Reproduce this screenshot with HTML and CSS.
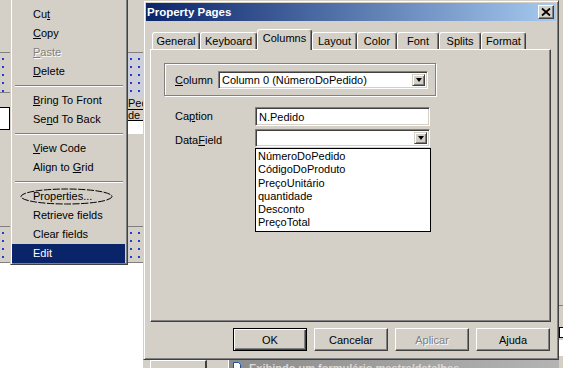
FILE: index.html
```html
<!DOCTYPE html>
<html lang="pt">
<head>
    <meta charset="UTF-8">
    <title>Property Pages</title>
    <link rel="stylesheet" href="styles.css">
</head>
<body>
<div class="desk">

    <!-- Form designer behind the popup menu -->
    <div class="designer">
        <div class="strip strip-left">
            <div class="b-grey h52"></div>
            <div class="b-line"></div>
            <div class="b-dots h39"></div>
            <div class="b-line"></div>
            <div class="b-grey h14"></div>
            <div class="b-cell"></div>
            <div class="b-grey h96"></div>
            <div class="b-line"></div>
            <div class="b-dots h35"></div>
            <div class="b-line"></div>
            <div class="b-white"></div>
        </div>
        <div class="strip strip-right">
            <div class="b-grey h52"></div>
            <div class="b-line"></div>
            <div class="b-dots b-blue h44"></div>
            <div class="b-text h13">Ped</div>
            <div class="b-text h11">de</div>
            <div class="b-white h13"></div>
            <div class="b-grey h92"></div>
            <div class="b-line"></div>
            <div class="b-dots h35"></div>
            <div class="b-line"></div>
            <div class="b-white"></div>
        </div>
    </div>

    <!-- Popup menu -->
    <ul class="menu">
        <li>Cu<u>t</u></li>
        <li><u>C</u>opy</li>
        <li class="off"><u>P</u>aste</li>
        <li><u>D</u>elete</li>
        <li class="sep"></li>
        <li><u>B</u>ring To Front</li>
        <li>Se<u>n</u>d To Back</li>
        <li class="sep"></li>
        <li><u>V</u>iew Code</li>
        <li>Align to <u>G</u>rid</li>
        <li class="sep"></li>
        <li class="circled">Properties...
            <svg class="ring" width="93" height="17" viewBox="0 0 93 17">
                <ellipse cx="46.5" cy="8.5" rx="45.5" ry="7.5" fill="none" stroke="#000" stroke-width="1" stroke-dasharray="7 1.5"/>
            </svg>
        </li>
        <li>Retrieve fields</li>
        <li>Clear fields</li>
        <li class="hot">Edit</li>
    </ul>

    <!-- Property Pages dialog -->
    <div class="dialog">
        <div class="titlebar">
            <span class="title">Property Pages</span>
            <button class="close">
                <svg width="14" height="12" viewBox="0 0 14 12">
                    <path d="M3 2.5l8 7M11 2.5l-8 7" stroke="#000" stroke-width="1.7" fill="none"/>
                </svg>
            </button>
        </div>
        <div class="sheet">
            <div class="tabs">
                <div class="tab">General</div>
                <div class="tab">Keyboard</div>
                <div class="tab on">Columns</div>
                <div class="tab">Layout</div>
                <div class="tab">Color</div>
                <div class="tab">Font</div>
                <div class="tab">Splits</div>
                <div class="tab">Format</div>
            </div>
            <div class="page">
                <div class="group">
                    <label class="group-label"><u>C</u>olumn</label>
                    <div class="combo combo-column">
                        <span class="combo-text">Column 0 (NúmeroDoPedido)</span>
                        <span class="drop"></span>
                    </div>
                </div>
                <div class="fields">
                    <label class="field-label">Ca<u>p</u>tion</label>
                    <div class="edit">N.Pedido</div>
                    <label class="field-label low">Data<u>F</u>ield</label>
                    <div class="combo">
                        <span class="combo-text"></span>
                        <span class="drop"></span>
                        <ul class="droplist">
                            <li>NúmeroDoPedido</li>
                            <li>CódigoDoProduto</li>
                            <li>PreçoUnitário</li>
                            <li>quantidade</li>
                            <li>Desconto</li>
                            <li>PreçoTotal</li>
                        </ul>
                    </div>
                </div>
            </div>
            <div class="buttons">
                <button class="btn default">OK</button>
                <button class="btn">Cancelar</button>
                <button class="btn disabled">Aplicar</button>
                <button class="btn">Ajuda</button>
            </div>
        </div>
    </div>

    <!-- Window behind the dialog, peeking out at the bottom -->
    <div class="behind">
        <div class="bh-gap"></div>
        <div class="bh-btn"></div>
        <div class="bh-sep"></div>
        <div class="bh-caption">
            <svg class="bh-icon" width="9" height="9" viewBox="0 0 9 9">
                <path d="M0.5 0.5h5l2 2v6h-7z" fill="#fff" stroke="#1c4fa0"/>
            </svg>
            <span>Exibindo um formulário mestre/detalhes</span>
        </div>
    </div>

    <div class="edge">
        <div class="e-grey h305"></div>
        <div class="b-line"></div>
        <div class="e-grey h21"></div>
        <div class="e-icon"></div>
        <div class="e-white"></div>
    </div>
</div>
</body>
</html>
```

FILE: styles.css
```css
* {
    margin: 0;
    padding: 0;
    box-sizing: border-box;
}

body {
    width: 563px;
    height: 368px;
    overflow: hidden;
    background: #d4d0c8;
    font-family: 'Liberation Sans', Arial, sans-serif;
    font-size: 11px;
    color: #000;
}

.desk {
    position: relative;
    width: 563px;
    height: 368px;
    overflow: hidden;
}

/* Form designer scraps */
.designer {
    position: absolute;
    left: 0;
    top: 0;
    width: 143px;
    height: 368px;
    display: flex;
    justify-content: space-between;
    background: #fff;
}

.strip {
    display: flex;
    flex-direction: column;
    height: 100%;
}

.strip-left { width: 10px; }
.strip-right { width: 15px; overflow: hidden; }

.b-grey { background: #d4d0c8; }
.b-line { height: 1px; background: #808080; }
.b-white { background: #fff; flex-grow: 1; }
.b-white.h13 { flex-grow: 0; }

.b-dots {
    background-color: #d4d0c8;
    background-image: radial-gradient(circle, #1b3fd6 0.9px, transparent 1.1px);
    background-size: 8px 8px;
    background-position: -1px 2px;
}

.b-blue { background-color: #cfcfda; }

.b-cell {
    height: 23px;
    background: #fff;
    border: 1px solid #000;
    border-left: 0;
}

.b-text {
    background: #d4d0c8;
    border-bottom: 1px solid #000;
    line-height: 12px;
    white-space: nowrap;
}

.h13 { height: 13px; }
.h11 { height: 11px; line-height: 10px; }
.h14 { height: 14px; }
.h21 { height: 21px; }
.h35 { height: 35px; }
.h39 { height: 39px; }
.h44 { height: 44px; }
.h52 { height: 52px; }
.h92 { height: 92px; }
.h96 { height: 96px; }
.h305 { height: 305px; }

/* Popup menu */
.menu {
    position: absolute;
    left: 10px;
    top: 0;
    width: 118px;
    list-style: none;
    padding: 5px 2px 1px 1px;
    background: #d4d0c8;
    border: 1px solid;
    border-top: 0;
    border-color: #d4d0c8 #404040 #404040 #d4d0c8;
    box-shadow: inset 1px 0 #fff, inset -1px -1px #808080;
    z-index: 2;
}

.menu li {
    position: relative;
    height: 19px;
    line-height: 19px;
    padding-left: 21px;
    white-space: nowrap;
}

.menu li.off {
    color: #808080;
    text-shadow: 1px 1px 0 #fff;
}

.menu li.hot {
    background: #0a246a;
    color: #fff;
}

.menu li.sep {
    height: 10px;
    padding: 4px 2px 0 3px;
}

.menu li.sep::before {
    content: '';
    display: block;
    border-top: 1px solid #808080;
    border-bottom: 1px solid #fff;
}

.ring {
    position: absolute;
    left: 8px;
    top: 1px;
    overflow: visible;
}

/* Dialog */
.dialog {
    position: absolute;
    left: 143px;
    top: 0;
    width: 416px;
    height: 360px;
    padding: 2px;
    background: #d4d0c8;
    border: 1px solid;
    border-color: #d4d0c8 #404040 #404040 #d4d0c8;
    box-shadow: inset 1px 1px #fff, inset -1px -1px #808080;
    z-index: 3;
}

.titlebar {
    height: 18px;
    display: flex;
    align-items: center;
    padding: 0 2px 0 1px;
    background: linear-gradient(90deg, #0a246a, #a6caf0);
}

.title {
    color: #fff;
    font-weight: bold;
    font-size: 11.5px;
}

.close {
    margin-left: auto;
    width: 16px;
    height: 14px;
    display: flex;
    align-items: center;
    justify-content: center;
    background: #d4d0c8;
    border: 1px solid;
    border-color: #fff #404040 #404040 #fff;
    box-shadow: inset -1px -1px #808080;
}

.sheet {
    padding: 8px 5px 0 4px;
}

.tabs {
    display: flex;
    align-items: flex-end;
    height: 20px;
    padding-left: 2px;
}

.tab {
    height: 17px;
    line-height: 16px;
    text-align: center;
    white-space: nowrap;
    border: 1px solid;
    border-bottom: 0;
    border-color: #fff #404040 transparent #fff;
    border-radius: 3px 3px 0 0;
    box-shadow: inset -1px 0 #808080;
}

/* tab widths as drawn by the control */
.tab:nth-child(1) { width: 48px; }
.tab:nth-child(2) { width: 57px; }
.tab:nth-child(3) { width: 55px; }
.tab:nth-child(4) { width: 45px; }
.tab:nth-child(5) { width: 40px; }
.tab:nth-child(6) { width: 42px; }
.tab:nth-child(7) { width: 42px; }
.tab:nth-child(8) { width: 45px; }

.tab.on {
    position: relative;
    z-index: 1;
    height: 21px;
    margin-bottom: -1px;
    background: #d4d0c8;
}

.page {
    height: 273px;
    padding: 13px 0 0 13px;
    border: 1px solid;
    border-color: #fff #404040 #404040 #fff;
    box-shadow: inset -1px -1px #808080;
}

.group {
    width: 272px;
    height: 33px;
    display: flex;
    align-items: center;
    padding-left: 10px;
    border: 1px solid #808080;
    box-shadow: inset 1px 1px #fff, 1px 1px #fff;
}

.group-label {
    width: 43px;
}

.combo {
    position: relative;
    height: 18px;
    display: flex;
    padding: 2px;
    background: #fff;
    border: 1px solid;
    border-color: #808080 #fff #fff #808080;
    box-shadow: inset 1px 1px #404040, inset -1px -1px #d4d0c8;
}

.combo-column {
    width: 210px;
}

.combo-text {
    flex-grow: 1;
    line-height: 12px;
    padding-left: 1px;
    white-space: nowrap;
}

.drop {
    width: 13px;
    display: flex;
    align-items: center;
    justify-content: center;
    background: #d4d0c8;
    border: 1px solid;
    border-color: #d4d0c8 #404040 #404040 #d4d0c8;
    box-shadow: inset 1px 1px #fff, inset -1px -1px #808080;
}

.drop::after {
    content: '';
    border-top: 4px solid #000;
    border-left: 3.5px solid transparent;
    border-right: 3.5px solid transparent;
}

.fields {
    display: grid;
    grid-template-columns: 80px 175px;
    grid-template-rows: 19px 18px;
    row-gap: 3px;
    margin: 11px 0 0 11px;
}

.field-label {
    align-self: center;
    line-height: 13px;
}

.field-label.low {
    align-self: end;
}

.edit {
    height: 19px;
    line-height: 15px;
    padding: 2px 3px;
    background: #fff;
    border: 1px solid;
    border-color: #808080 #fff #fff #808080;
    box-shadow: inset 1px 1px #404040, inset -1px -1px #d4d0c8;
}

.droplist {
    position: absolute;
    left: -1px;
    top: calc(100% + 2px);
    width: 176px;
    list-style: none;
    padding: 1px 0 1px 2px;
    background: #fff;
    border: 1px solid #000;
    z-index: 2;
}

.droplist li {
    height: 13.25px;
    line-height: 13.25px;
    white-space: nowrap;
}

.buttons {
    display: flex;
    justify-content: flex-end;
    gap: 7px;
    margin-top: 6px;
    padding-right: 1px;
}

.btn {
    width: 74px;
    height: 23px;
    font: inherit;
    color: #000;
    background: #d4d0c8;
    border: 1px solid;
    border-color: #fff #404040 #404040 #fff;
    box-shadow: inset -1px -1px #808080;
}

.btn.default {
    border-color: #000;
    box-shadow: inset 1px 1px #fff, inset -1px -1px #404040, inset -2px -2px #808080;
}

.btn.disabled {
    color: #808080;
    text-shadow: 1px 1px 0 #fff;
}

/* Window behind the dialog */
.behind {
    position: absolute;
    left: 143px;
    top: 360px;
    width: 416px;
    height: 8px;
    display: flex;
    overflow: hidden;
}

.bh-gap {
    width: 7px;
}

.bh-btn {
    width: 57px;
    border-top: 1px solid #fff;
    border-left: 1px solid #fff;
    border-right: 2px solid #404040;
}

.bh-sep {
    width: 22px;
    border-left: 3px solid #d4d0c8;
    border-right: 1px solid #fff;
}

.bh-caption {
    flex-grow: 1;
    display: flex;
    align-items: flex-start;
    gap: 7px;
    padding: 2px 0 0 4px;
    background: linear-gradient(90deg, #8c8c8c, #b4b4b4);
    color: #dcdad4;
    font-weight: bold;
    line-height: 12px;
    white-space: nowrap;
}

.bh-icon {
    flex-shrink: 0;
}

/* Scraps right of the dialog */
.edge {
    position: absolute;
    left: 559px;
    top: 0;
    width: 4px;
    height: 368px;
    display: flex;
    flex-direction: column;
}

.e-grey { background: #d4d0c8; }

.e-icon {
    height: 11px;
    background: #fff;
    border: 1px solid #000;
    border-right: 0;
}

.e-white {
    height: 16px;
    margin-top: 2px;
    background: #fff;
}
```
